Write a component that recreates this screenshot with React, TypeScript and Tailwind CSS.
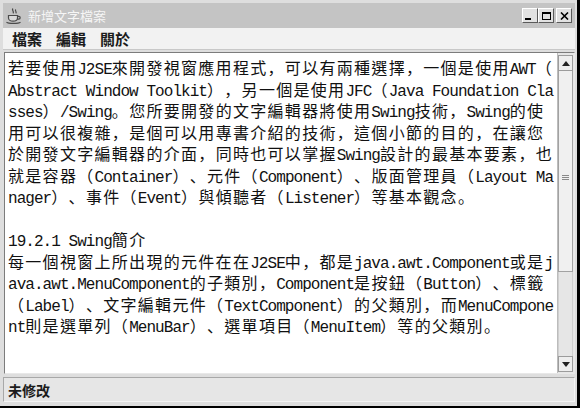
import React from 'react';

const lines = [
  '若要使用J2SE來開發視窗應用程式，可以有兩種選擇，一個是使用AWT（',
  'Abstract Window Toolkit），另一個是使用JFC（Java Foundation Cla',
  'sses）/Swing。您所要開發的文字編輯器將使用Swing技術，Swing的使',
  '用可以很複雜，是個可以用專書介紹的技術，這個小節的目的，在讓您',
  '於開發文字編輯器的介面，同時也可以掌握Swing設計的最基本要素，也',
  '就是容器（Container）、元件（Component）、版面管理員（Layout Ma',
  'nager）、事件（Event）與傾聽者（Listener）等基本觀念。',
  '',
  '19.2.1 Swing簡介',
  '每一個視窗上所出現的元件在在J2SE中，都是java.awt.Component或是j',
  'ava.awt.MenuComponent的子類別，Component是按鈕（Button）、標籤',
  '（Label）、文字編輯元件（TextComponent）的父類別，而MenuCompone',
  'nt則是選單列（MenuBar）、選單項目（MenuItem）等的父類別。',
];

// split a line into ascii / punctuation / cjk runs so each gets its own cell width
const TextLine = ({ text }: { text: string }) => {
  const runs = text.match(/[\x20-\x7e]+|[，。、（）]+|[^\x20-\x7e，。、（）]+/g) || [];
  return (
    <div className="h-[21.5px] leading-[21.5px] whitespace-pre text-[16px] text-[#111] [text-spacing-trim:space-all]">
      {runs.map((r, i) => {
        if (/^[\x20-\x7e]+$/.test(r)) {
          return (
            <span key={i} className="font-['Liberation_Mono',monospace] tracking-[-0.95px]">
              {r}
            </span>
          );
        }
        if (/^[，。、（）]+$/.test(r)) {
          return (
            <span key={i} className="font-['Noto_Sans_CJK_JP',sans-serif] tracking-[1.3px] [text-spacing-trim:space-all]">
              {r}
            </span>
          );
        }
        return (
          <span key={i} className="font-['Noto_Sans_CJK_TC',sans-serif] tracking-[1.3px]">
            {r}
          </span>
        );
      })}
    </div>
  );
};

const JavaCup = () => (
  <svg width="18" height="18" viewBox="0 0 18 18" fill="none" stroke="#4a4a4a" strokeWidth="1.2">
    <path d="M8 1.5c-2 1.8 1.8 2.8 0 4.8" />
    <path d="M10.8 2.5c-1.4 1.4 1.4 2.2 0 3.8" />
    <path d="M3.5 8.5h9v2.5c0 2-2 3.2-4.5 3.2s-4.5-1.2-4.5-3.2z" fill="#d8d8d8" />
    <path d="M12.5 9.3h1.3a1.4 1.4 0 0 1 0 2.8h-1.6" />
    <path d="M1.5 15.2c2 1.6 12 1.6 14 0" />
  </svg>
);

const WinButton = ({ children, className = '' }: { children: React.ReactNode; className?: string }) => (
  <div
    className={`w-[16px] h-[15px] bg-[#e2e2e2] border border-t-white border-l-white border-r-[#5a5a5a] border-b-[#5a5a5a] flex items-center justify-center ${className}`}
  >
    {children}
  </div>
);

const ScrollArrow = ({ up }: { up?: boolean }) => (
  <div className="h-[16px] bg-[#eeeeee] border border-[#9c9c9c] flex items-center justify-center">
    <svg width="8" height="5" viewBox="0 0 8 5">
      {up ? <path d="M0 5h8L4 0z" fill="#222" /> : <path d="M0 0h8L4 5z" fill="#222" />}
    </svg>
  </div>
);

export default function App() {
  return (
    <div className="w-[583px] h-[412px] bg-white">
      <div className="w-[580px] h-[408px] bg-[#dedede] border-r-[3px] border-b-[2px] border-black flex flex-col pl-[3px] pr-[2px] pt-[3px]">
        {/* title bar */}
        <div className="h-[25px] bg-[#c4c4c4] flex items-center pl-[2px] pr-[3px]">
          <JavaCup />
          <span className="ml-[5px] text-[13px] text-[#f6f6f6] font-['Noto_Sans_CJK_TC',sans-serif] leading-none">
            新增文字檔案
          </span>
          <div className="ml-auto flex items-center">
            <WinButton>
              <div className="w-[6px] h-[2px] bg-black mt-[7px] mr-[4px]" />
            </WinButton>
            <WinButton>
              <div className="w-[9px] h-[8px] border border-black border-t-2" />
            </WinButton>
            <WinButton className="ml-[2px]">
              <svg width="9" height="8" viewBox="0 0 9 8" stroke="#000" strokeWidth="1.6">
                <path d="M1 0.5l7 7M8 0.5l-7 7" />
              </svg>
            </WinButton>
          </div>
        </div>

        {/* menu bar */}
        <div className="h-[22px] bg-[#f2f2f2] border-b border-[#c8c8c8] flex items-center gap-[14px] pl-[9px] text-[15px] font-bold text-[#1c1c1c] font-['Noto_Sans_CJK_TC',sans-serif] leading-none">
          <span>檔案</span>
          <span>編輯</span>
          <span>關於</span>
        </div>

        {/* scroll pane */}
        <div className="mt-[2px] ml-[1px] h-[322px] border border-[#7c7c7c] border-r-[#e8e8e8] border-b-[#e8e8e8] flex">
          <div className="flex-1 bg-white pl-[3px] pt-[4px] overflow-hidden">
            {lines.map((l, i) => (
              <TextLine key={i} text={l} />
            ))}
          </div>
          <div className="w-[17px] bg-[#e6e6e6] border-l border-[#bcbcbc] flex flex-col pt-[2px] pb-[1px] pr-[1px]">
            <ScrollArrow up />
            <div className="h-[201px] bg-[#f0f0f0] border border-[#a2a2a2] border-t-0 flex flex-col items-center pt-[104px]">
              <div className="w-[7px] flex flex-col gap-[1px]">
                <div className="h-px bg-[#8a8a8a]" />
                <div className="h-px bg-[#8a8a8a]" />
                <div className="h-px bg-[#8a8a8a]" />
              </div>
            </div>
            <div className="flex-1 bg-[#e6e6e6] border-x border-[#cfcfcf]" />
            <ScrollArrow />
          </div>
        </div>

        {/* status bar */}
        <div className="mt-[3px] h-[25px] bg-[#e6e6e6] border border-[#a8a8a8] border-r-[#f4f4f4] border-b-[#f4f4f4] flex items-center pl-[4px] text-[14px] font-bold text-[#1c1c1c] font-['Noto_Sans_CJK_TC',sans-serif] leading-none">
          未修改
        </div>
      </div>
    </div>
  );
}
